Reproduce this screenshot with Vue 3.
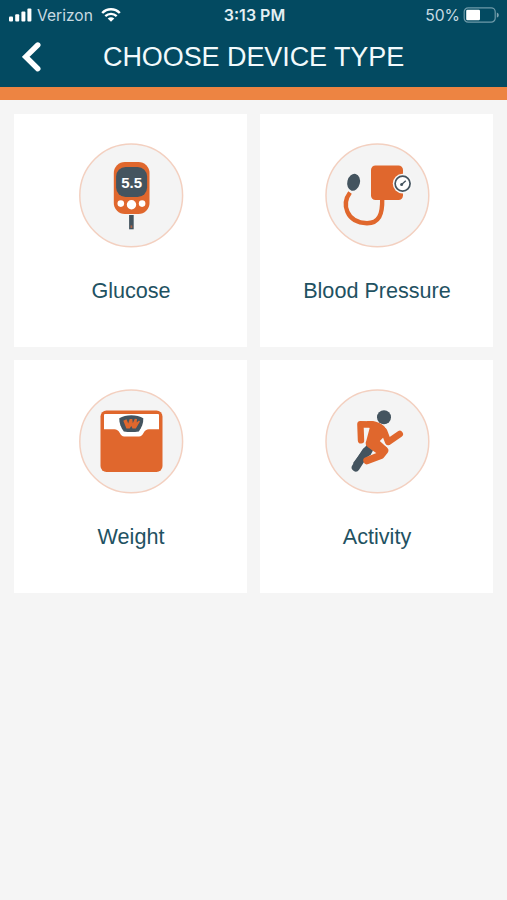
<script setup>
const devices = [
  { id: 'glucose', label: 'Glucose', viewBox: '0.5 0 120 120', cx: 60.7 },
  { id: 'pressure', label: 'Blood Pressure', viewBox: '0 0 120 120', cx: 60.4 },
  { id: 'weight', label: 'Weight', viewBox: '0.5 0 120 120', cx: 60.7 },
  { id: 'activity', label: 'Activity', viewBox: '0 0 120 120', cx: 60.4 },
]
</script>

<template>
  <div class="screen">
    <header class="header">
      <div class="status">
        <div class="status-left">
          <svg class="signal" width="23" height="14" viewBox="0 0 23 14" fill="#fff">
            <rect x="0" y="8.6" width="4" height="5" rx="1" />
            <rect x="6.2" y="6.3" width="4" height="7.3" rx="1" />
            <rect x="12.4" y="3.6" width="4" height="10" rx="1" />
            <rect x="18.4" y="0.4" width="4" height="13.2" rx="1" />
          </svg>
          <span class="carrier">Verizon</span>
          <svg class="wifi" width="20" height="14" viewBox="0 0 20 14" fill="none" stroke="#fff">
            <path d="M1.2 5C6.1 0 13.9 0 18.8 5" stroke-width="2.5" />
            <path d="M4.3 8.2c3.3-3.2 8.1-3.2 11.4 0" stroke-width="2.3" />
            <path d="M6.7 10.5c2-1.8 4.6-1.8 6.6 0L10 13.7z" fill="#fff" stroke="none" />
          </svg>
        </div>
        <span class="time">3:13 PM</span>
        <div class="status-right">
          <span class="percent">50%</span>
          <svg class="battery" width="37" height="16" viewBox="0 0 37 16">
            <rect x="1.2" y="0.8" width="31" height="14.4" rx="4" fill="none" stroke="#6f9aa9" stroke-width="1.2" />
            <rect x="3.2" y="2.8" width="13.8" height="10.4" rx="1.2" fill="#fff" />
            <path d="M33.8 5.4c2.6.9 2.6 4.3 0 5.2z" fill="#7fa3b0" />
          </svg>
        </div>
      </div>
      <div class="nav">
        <svg class="back" width="20" height="30" viewBox="0 0 20 30">
          <path d="M15.8 3L3.7 14.8l12.1 11.9" fill="none" stroke="#fff" stroke-width="5.4" stroke-linecap="round" stroke-linejoin="miter" />
        </svg>
        <h1 class="title">CHOOSE DEVICE TYPE</h1>
      </div>
    </header>

    <main class="grid">
      <section v-for="d in devices" :key="d.id" class="card">
        <svg class="icon" width="120" height="120" :viewBox="d.viewBox">
          <circle :cx="d.cx" cy="60.4" r="51.4" fill="#f4f4f4" stroke="#f3d0c0" stroke-width="1.5" />

          <g v-if="d.id === 'glucose'">
            <rect x="43.3" y="27" width="35.7" height="52" rx="11" fill="#e0672d" />
            <rect x="45.6" y="32" width="31" height="30" rx="9.5" fill="#44545f" />
            <text x="61.2" y="52.6" class="reading">5.5</text>
            <circle cx="50.3" cy="68.6" r="3.3" fill="#fff" />
            <circle cx="61" cy="69.8" r="4.7" fill="#fff" />
            <circle cx="71.6" cy="68.6" r="3.3" fill="#fff" />
            <rect x="58.6" y="80" width="4.6" height="14.3" fill="#44545f" />
            <rect x="60" y="90.4" width="1.8" height="2.6" fill="#a8644a" />
          </g>

          <g v-else-if="d.id === 'pressure'">
            <path d="M33 57.5C24.5 69 29 87.5 50 88.2c12 0 15.6-8.6 15.2-24.6" fill="none" stroke="#e0672d" stroke-width="4.4" />
            <rect x="54" y="30.4" width="32" height="34.6" rx="4.5" fill="#e0672d" />
            <ellipse cx="36.6" cy="47.3" rx="6.3" ry="8.6" transform="rotate(14 36.6 47.3)" fill="#44545f" />
            <circle cx="85.6" cy="48.6" r="9.8" fill="#f8f8f8" />
            <circle cx="85.6" cy="48.6" r="7.5" fill="#fff" stroke="#44545f" stroke-width="1.7" />
            <path d="M84.6 49.6l4.2-3.8" stroke="#44545f" stroke-width="1.4" />
            <circle cx="84.6" cy="49.4" r="1.5" fill="#44545f" />
          </g>

          <g v-else-if="d.id === 'weight'">
            <rect x="30" y="29.4" width="62" height="61.6" rx="6" fill="#e0672d" />
            <path d="M33.5 34q0-1 1-1h53q1 0 1 1v14.2H78.5c-2.6 0-4 1.2-5.5 3.8-1.2 2.3-2.3 3.5-4.5 3.5H53.8c-2.2 0-3.3-1.2-4.5-3.5-1.5-2.6-3-3.8-5.5-3.8H33.5z" fill="#fff" />
            <path d="M48.8 37.2c6.2-3.9 17.8-3.9 24 0 .3 4.8-1.7 9.4-4.5 13.3q-7.5 1-15 0C50.5 46.6 48.5 42 48.8 37.2z" fill="#44545f" />
            <path d="M52.8 39.8L56 38.3l1.7 4.1 1.5-4.5 2.6.1.5 4.3 2-4.6 2.2.3-.3 3.5 2.3-2 1 .9-4.2 7h-3.3l-1.2-2.5-1.6 2.5h-3.3z" fill="#e0672d" />
          </g>

          <g v-else>
            <circle cx="67" cy="36.2" r="7" fill="#44545f" />
            <path d="M49 70.5L38.7 86.5" fill="none" stroke="#44545f" stroke-width="8" stroke-linecap="round" />
            <path d="M50 63.5l6 6-2.5 4.5-8 4.5-3.6 7-6-3.3z" fill="#44545f" />
            <g fill="none" stroke="#e0672d" stroke-linecap="round" stroke-linejoin="round">
              <path d="M44 59.3L43.4 43.3 55 43.5" stroke-width="6.4" />
              <path d="M67 50l4.2 11 11.6-8" stroke-width="6.4" />
              <path d="M56 62l11.6 7.7-3.6 4.5L50 79.6" stroke-width="7.4" />
            </g>
            <path d="M50 40.1c8-.4 13.4 1.3 17.9 6l2.6 6.2-7.7 7.7 7.6 7-9.8 6-9.6-6.7c-2.5-2-2.9-4-1.7-6.500l3.300-12.500z" fill="#e0672d" />
          </g>
        </svg>
        <span class="label">{{ d.label }}</span>
      </section>
    </main>
  </div>
</template>

<style>
body {
  margin: 0;
  background: #f5f5f5;
}
</style>

<style scoped>
.screen {
  width: 507px;
  height: 900px;
  background: #f5f5f5;
  font-family: "Liberation Sans", Arial, sans-serif;
}
.header {
  box-sizing: border-box;
  height: 100px;
  background: #034a61;
  border-bottom: 13px solid #ed8442;
}
.status {
  display: grid;
  grid-template-columns: 1fr auto 1fr;
  align-items: center;
  height: 30px;
  padding: 0 7px 0 9px;
  color: #fff;
  font-family: Inter, sans-serif;
  font-size: 16px;
}
.status-left,
.status-right {
  display: flex;
  align-items: center;
}
.status-right {
  justify-content: flex-end;
}
.carrier {
  margin-left: 5px;
  width: 56px;
  font-size: 15.6px;
  color: #c8dae1;
}
.wifi {
  margin-left: 8px;
}
.time {
  font-weight: 600;
  color: #e4eff3;
}
.percent {
  margin-right: 3px;
  font-size: 15.7px;
  color: #c8dae1;
}
.nav {
  display: grid;
  grid-template-columns: 103px auto;
  align-items: center;
  height: 54px;
}
.back {
  margin-left: 22px;
}
.title {
  margin: 0;
  font-size: 27px;
  font-weight: 400;
  line-height: 30px;
  letter-spacing: -0.08px;
  color: #f2fafc;
  white-space: nowrap;
}
.grid {
  display: grid;
  grid-template-columns: 233px 233px;
  grid-auto-rows: 233px;
  gap: 13px;
  padding: 14px;
}
.card {
  display: flex;
  flex-direction: column;
  align-items: center;
  background: #fff;
}
.icon {
  margin-top: 21px;
  flex: none;
}
.label {
  margin-top: 23px;
  padding-left: 1px;
  font-size: 21.6px;
  line-height: 26px;
  color: #1f5262;
}
.reading {
  fill: #fff;
  font: bold 15px "Liberation Sans", Arial, sans-serif;
  text-anchor: middle;
}
</style>
